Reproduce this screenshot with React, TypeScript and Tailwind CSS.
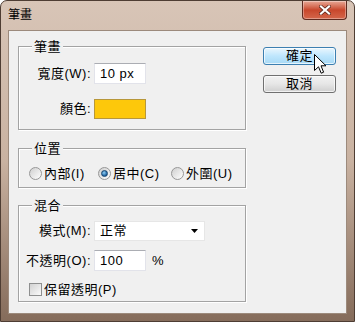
import React from 'react';

const FONT = { fontFamily: '"Liberation Sans", "Noto Sans CJK TC", sans-serif' };

const Group: React.FC<{ title: string; className: string; children: React.ReactNode }> = ({ title, className, children }) => (
    <div className={`relative border border-[#a3a3a3] shadow-[inset_1px_1px_0_#ffffff,1px_1px_0_#ffffff] ${className}`}>
        <span className="absolute left-[13px] top-[-8px] px-[2px] bg-[#f0f0f0] leading-[15px]">{title}</span>
        {children}
    </div>
);

const Radio: React.FC<{ checked?: boolean }> = ({ checked }) => (
    <div className="w-[13px] h-[13px] rounded-full border border-[#979797] bg-gradient-to-br from-[#cfcfcf] to-[#ffffff] flex items-center justify-center">
        {checked && <div className="w-[7px] h-[7px] rounded-full bg-[radial-gradient(circle_at_40%_35%,#8fd0f5,#1c5f9e_70%)] border border-[#17456f]" />}
    </div>
);

const Field: React.FC<{ w: string; children?: React.ReactNode }> = ({ w, children }) => (
    <div className={`${w} h-[21px] bg-white border border-[#e2e3ea] border-t-[#abadb3] flex items-center pl-[5px]`}>{children}</div>
);

const App: React.FC = () => {
    return (
        <div style={FONT} className="w-[355px] h-[322px] text-[13px] tracking-[0.5px] text-black">
            <div className="relative w-full h-full rounded-t-[7px] border border-[#4e3d33] bg-gradient-to-b from-[#d8c5b7] via-[#c9b2a1] to-[#856c5b] flex flex-col">
                {/* title bar */}
                <div className="h-[29px] flex justify-between items-start">
                    <span className="ml-[7px] mt-[7px] text-[12px] leading-[14px] tracking-normal">筆畫</span>
                    <div className="mr-[7px] w-[45px] h-[19px] rounded-b-[4px] border border-t-0 border-[#5e2b20] bg-gradient-to-b from-[#e7a896] via-[#c8472c] to-[#d4664a] flex items-center justify-center shadow-[inset_0_0_0_1px_rgba(255,255,255,0.35)]">
                        <svg width="12" height="10" viewBox="0 0 12 10">
                            <path d="M2 1.5 L10 8.5 M10 1.5 L2 8.5" stroke="#5a2418" strokeWidth="3.6" strokeLinecap="square" />
                            <path d="M2 1.5 L10 8.5 M10 1.5 L2 8.5" stroke="#ffffff" strokeWidth="2.2" strokeLinecap="square" />
                        </svg>
                    </div>
                </div>

                {/* client area */}
                <div className="flex-1 mx-[7px] mb-[7px] border border-[#9c8a7c] bg-[#f0f0f0] flex pl-[9px] pt-[15px]">
                    <div className="w-[228px] flex flex-col">
                        <Group title="筆畫" className="h-[84px] pt-[16px] flex flex-col gap-[15px]">
                            <div className="flex items-center h-[21px]">
                                <span className="w-[72px] text-right">寬度(W):</span>
                                <div className="ml-[3px]"><Field w="w-[52px]">10 px</Field></div>
                            </div>
                            <div className="flex items-center h-[20px]">
                                <span className="w-[72px] text-right">顏色:</span>
                                <div className="ml-[3px] w-[52px] h-[20px] bg-[#fdc80b] border border-[#b7973a]" />
                            </div>
                        </Group>

                        <Group title="位置" className="mt-[18px] h-[40px] pt-[18px]">
                            <div className="flex items-center h-[13px] pl-[10px]">
                                <div className="w-[69px] flex items-center gap-[2px]"><Radio /><span>內部(I)</span></div>
                                <div className="w-[73px] flex items-center gap-[2px]"><Radio checked /><span>居中(C)</span></div>
                                <div className="flex items-center gap-[2px]"><Radio /><span>外圍(U)</span></div>
                            </div>
                        </Group>

                        <Group title="混合" className="mt-[17px] h-[97px] pt-[15px] flex flex-col">
                            <div className="flex items-center h-[20px]">
                                <span className="w-[72px] text-right">模式(M):</span>
                                <div className="ml-[3px] w-[111px] h-[20px] bg-white border border-[#e6e6e6] flex items-center justify-between pl-[5px] pr-[6px]">
                                    <span>正常</span>
                                    <svg width="7" height="4" viewBox="0 0 7 4"><path d="M0 0 H7 L3.5 4 Z" fill="#000" /></svg>
                                </div>
                            </div>
                            <div className="flex items-center h-[21px] mt-[9px]">
                                <span className="w-[72px] text-right">不透明(O):</span>
                                <div className="ml-[3px]"><Field w="w-[52px]">100</Field></div>
                                <span className="ml-[6px]">%</span>
                            </div>
                            <div className="flex items-center h-[13px] mt-[12px] pl-[10px] gap-[2px]">
                                <div className="w-[13px] h-[13px] border border-[#8e8f8f] bg-gradient-to-br from-[#d2d2d2] to-[#fafafa]" />
                                <span>保留透明(P)</span>
                            </div>
                        </Group>
                    </div>

                    <div className="ml-[17px] pt-[1px] w-[73px] flex flex-col gap-[10px]">
                        <button className="h-[18px] rounded-[3px] border border-[#3c7fb1] bg-gradient-to-b from-[#eaf6fd] via-[#bee6fd] to-[#a7d9f5] leading-[16px] shadow-[inset_0_0_0_1px_rgba(255,255,255,0.7)]">確定</button>
                        <button className="h-[18px] rounded-[3px] border border-[#707070] bg-gradient-to-b from-[#f2f2f2] via-[#e6e6e6] to-[#cfcfcf] leading-[16px] shadow-[inset_0_0_0_1px_rgba(255,255,255,0.7)]">取消</button>
                    </div>
                </div>

                {/* mouse pointer */}
                <svg className="absolute left-[313px] top-[53px]" width="13" height="20" viewBox="0 0 13 20">
                    <path d="M0.5 0.5 L0.5 16.5 L4.5 12.8 L7.2 19.2 L9.6 18.2 L7 11.8 L12 11.8 Z" fill="#fff" stroke="#000" strokeWidth="1" strokeLinejoin="round" />
                </svg>
            </div>
        </div>
    );
};

export default App;
